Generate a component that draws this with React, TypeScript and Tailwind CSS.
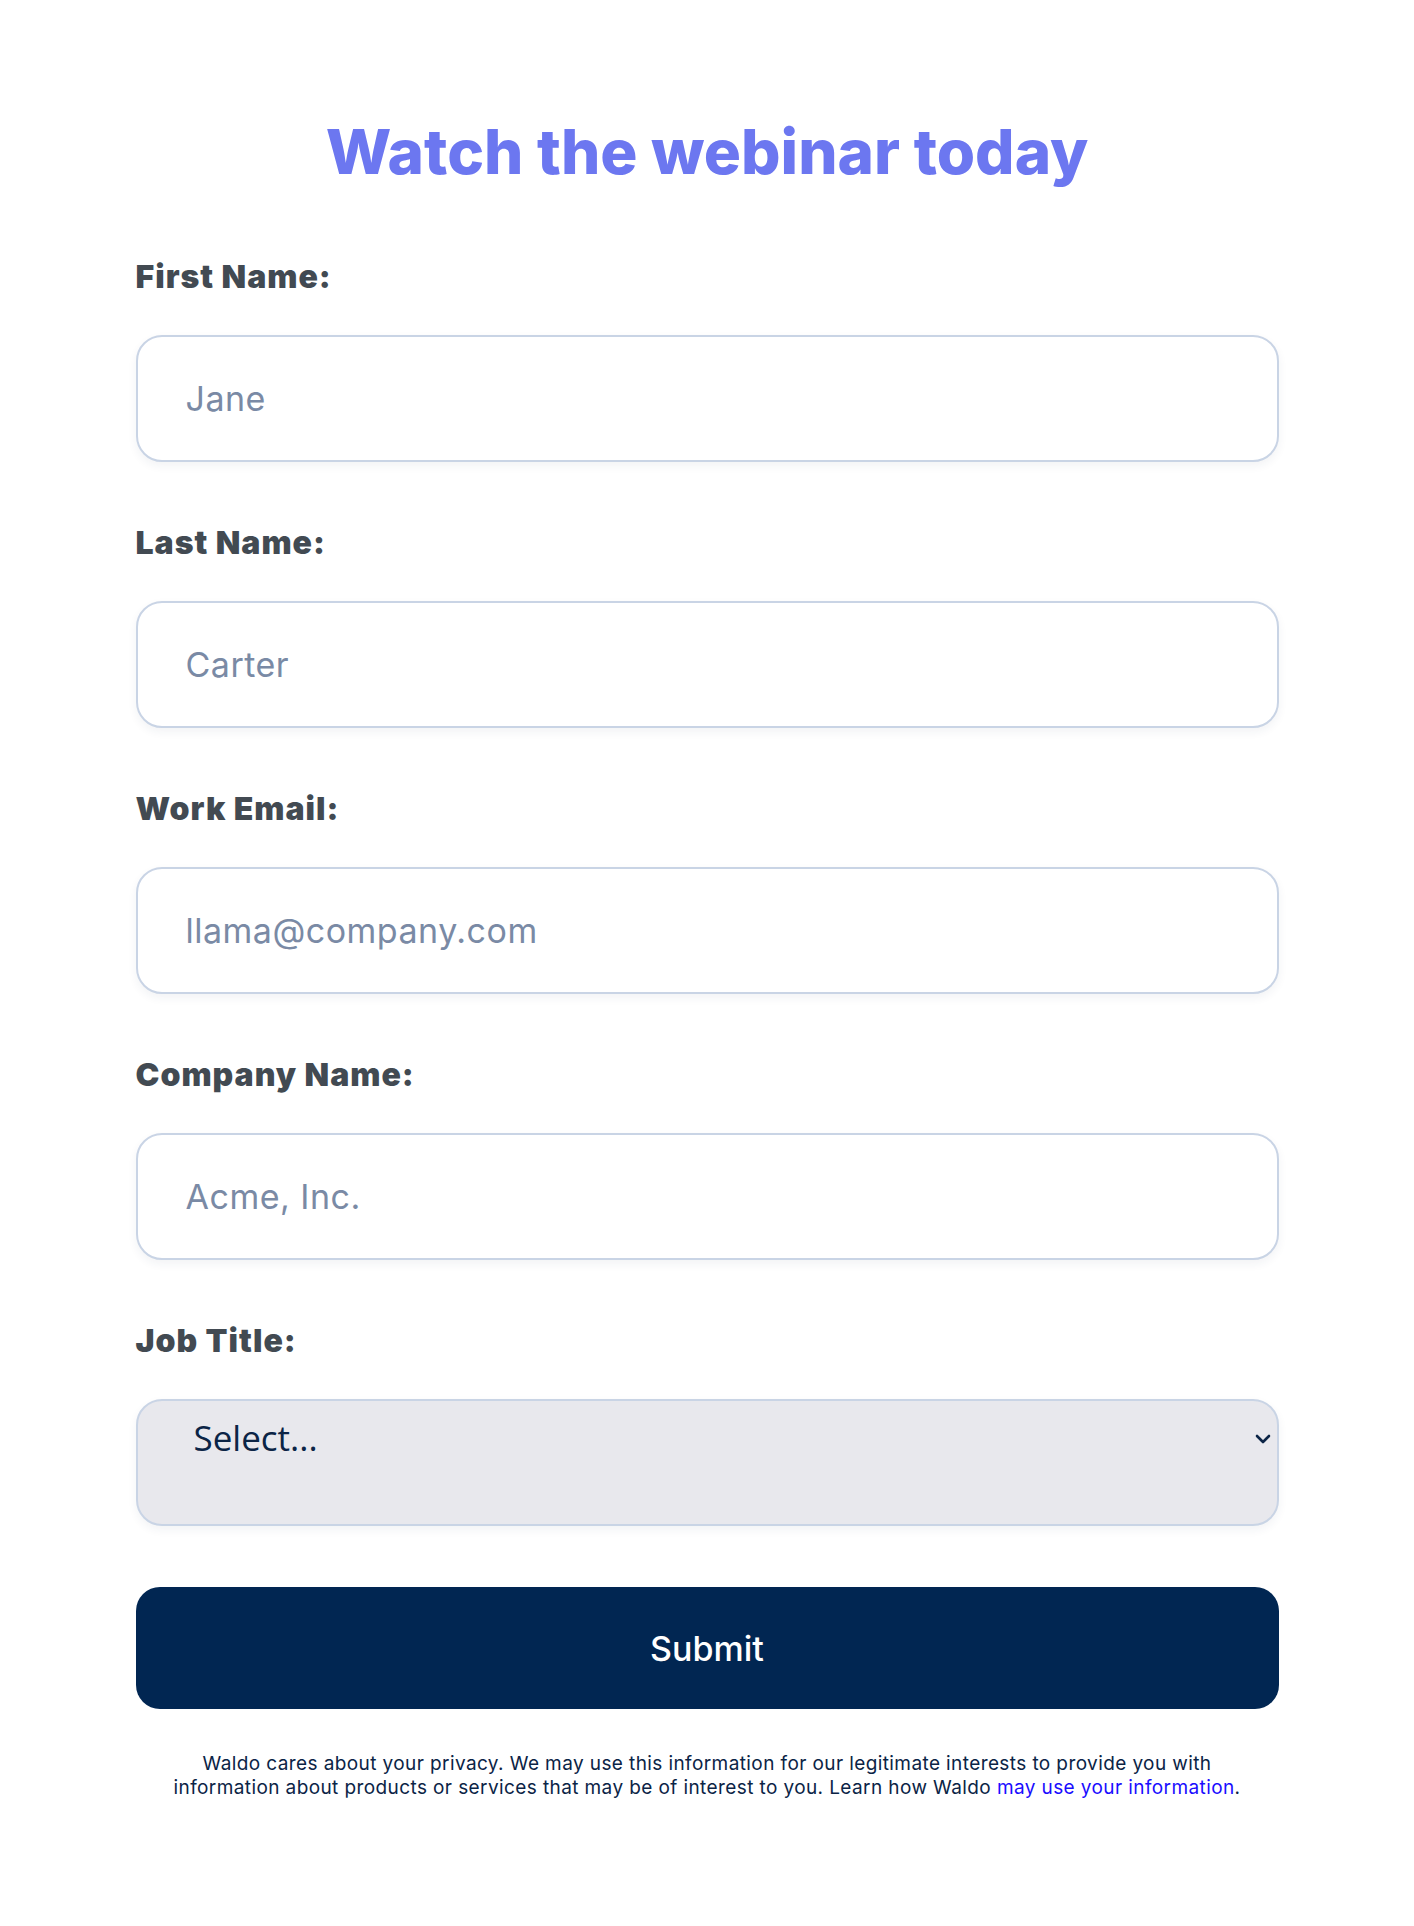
import React from 'react';

const fields = [
  { label: 'First Name:', placeholder: 'Jane' },
  { label: 'Last Name:', placeholder: 'Carter' },
  { label: 'Work Email:', placeholder: 'llama@company.com' },
  { label: 'Company Name:', placeholder: 'Acme, Inc.' },
];

export default function App() {
  return (
    <div className="min-h-screen bg-white" style={{ fontFamily: 'Inter, "Noto Sans", sans-serif' }}>
      <div className="mx-auto w-[1143px] pt-[121px] pb-[120px]">
        <h1 className="text-center text-[62px] leading-none font-extrabold text-[#6c77f0] tracking-[0px]">
          Watch the webinar today
        </h1>

        <form className="mt-[76px]" onSubmit={(e) => e.preventDefault()}>
          {fields.map((f) => (
            <div key={f.label} className="mb-[63px]">
              <label className="block text-[32px] leading-[36px] font-black tracking-[1px] text-[#424a52]">{f.label}</label>
              <input
                type="text"
                placeholder={f.placeholder}
                className="mt-[40px] block h-[127px] w-full rounded-[26px] border-2 border-[#c9d4e5] bg-white px-[48px] text-[34px] tracking-[0.5px] text-[#0b2446] placeholder:text-[#7a8aa5] shadow-[0_4px_10px_rgba(30,50,90,0.06)] outline-none"
              />
            </div>
          ))}

          <div>
            <label className="block text-[32px] leading-[36px] font-black tracking-[1px] text-[#424a52]">Job Title:</label>
            <div className="relative mt-[40px] h-[127px] w-full rounded-[26px] border-2 border-[#c9d4e5] bg-[#e8e8ed] shadow-[0_4px_10px_rgba(30,50,90,0.06)]">
              <div
                className="absolute left-[56px] top-[17px] text-[35px] leading-[40px] font-medium text-[#0b2446]"
                style={{ fontFamily: '"Open Sans", sans-serif' }}
              >
                Select...
              </div>
              <svg className="absolute right-[6px] top-[32px]" width="16" height="12" viewBox="0 0 16 12" fill="none">
                <path d="M2 3l6 6 6-6" stroke="#0b2446" strokeWidth="2.6" strokeLinecap="round" strokeLinejoin="round" />
              </svg>
            </div>
          </div>

          <button
            type="submit"
            className="mt-[61px] block h-[122px] w-full rounded-[24px] bg-[#012652] text-[34px] font-medium text-white"
          >
            Submit
          </button>
        </form>

        <p className="mt-[43px] text-center text-[19px] leading-[24px] tracking-[0.4px] text-[#0b2446]">
          Waldo cares about your privacy. We may use this information for our legitimate interests to provide you with
          <br />
          information about products or services that may be of interest to you. Learn how Waldo{' '}
          <a href="#" className="text-[#1a0dff]">may use your information</a>.
        </p>
      </div>
    </div>
  );
}
